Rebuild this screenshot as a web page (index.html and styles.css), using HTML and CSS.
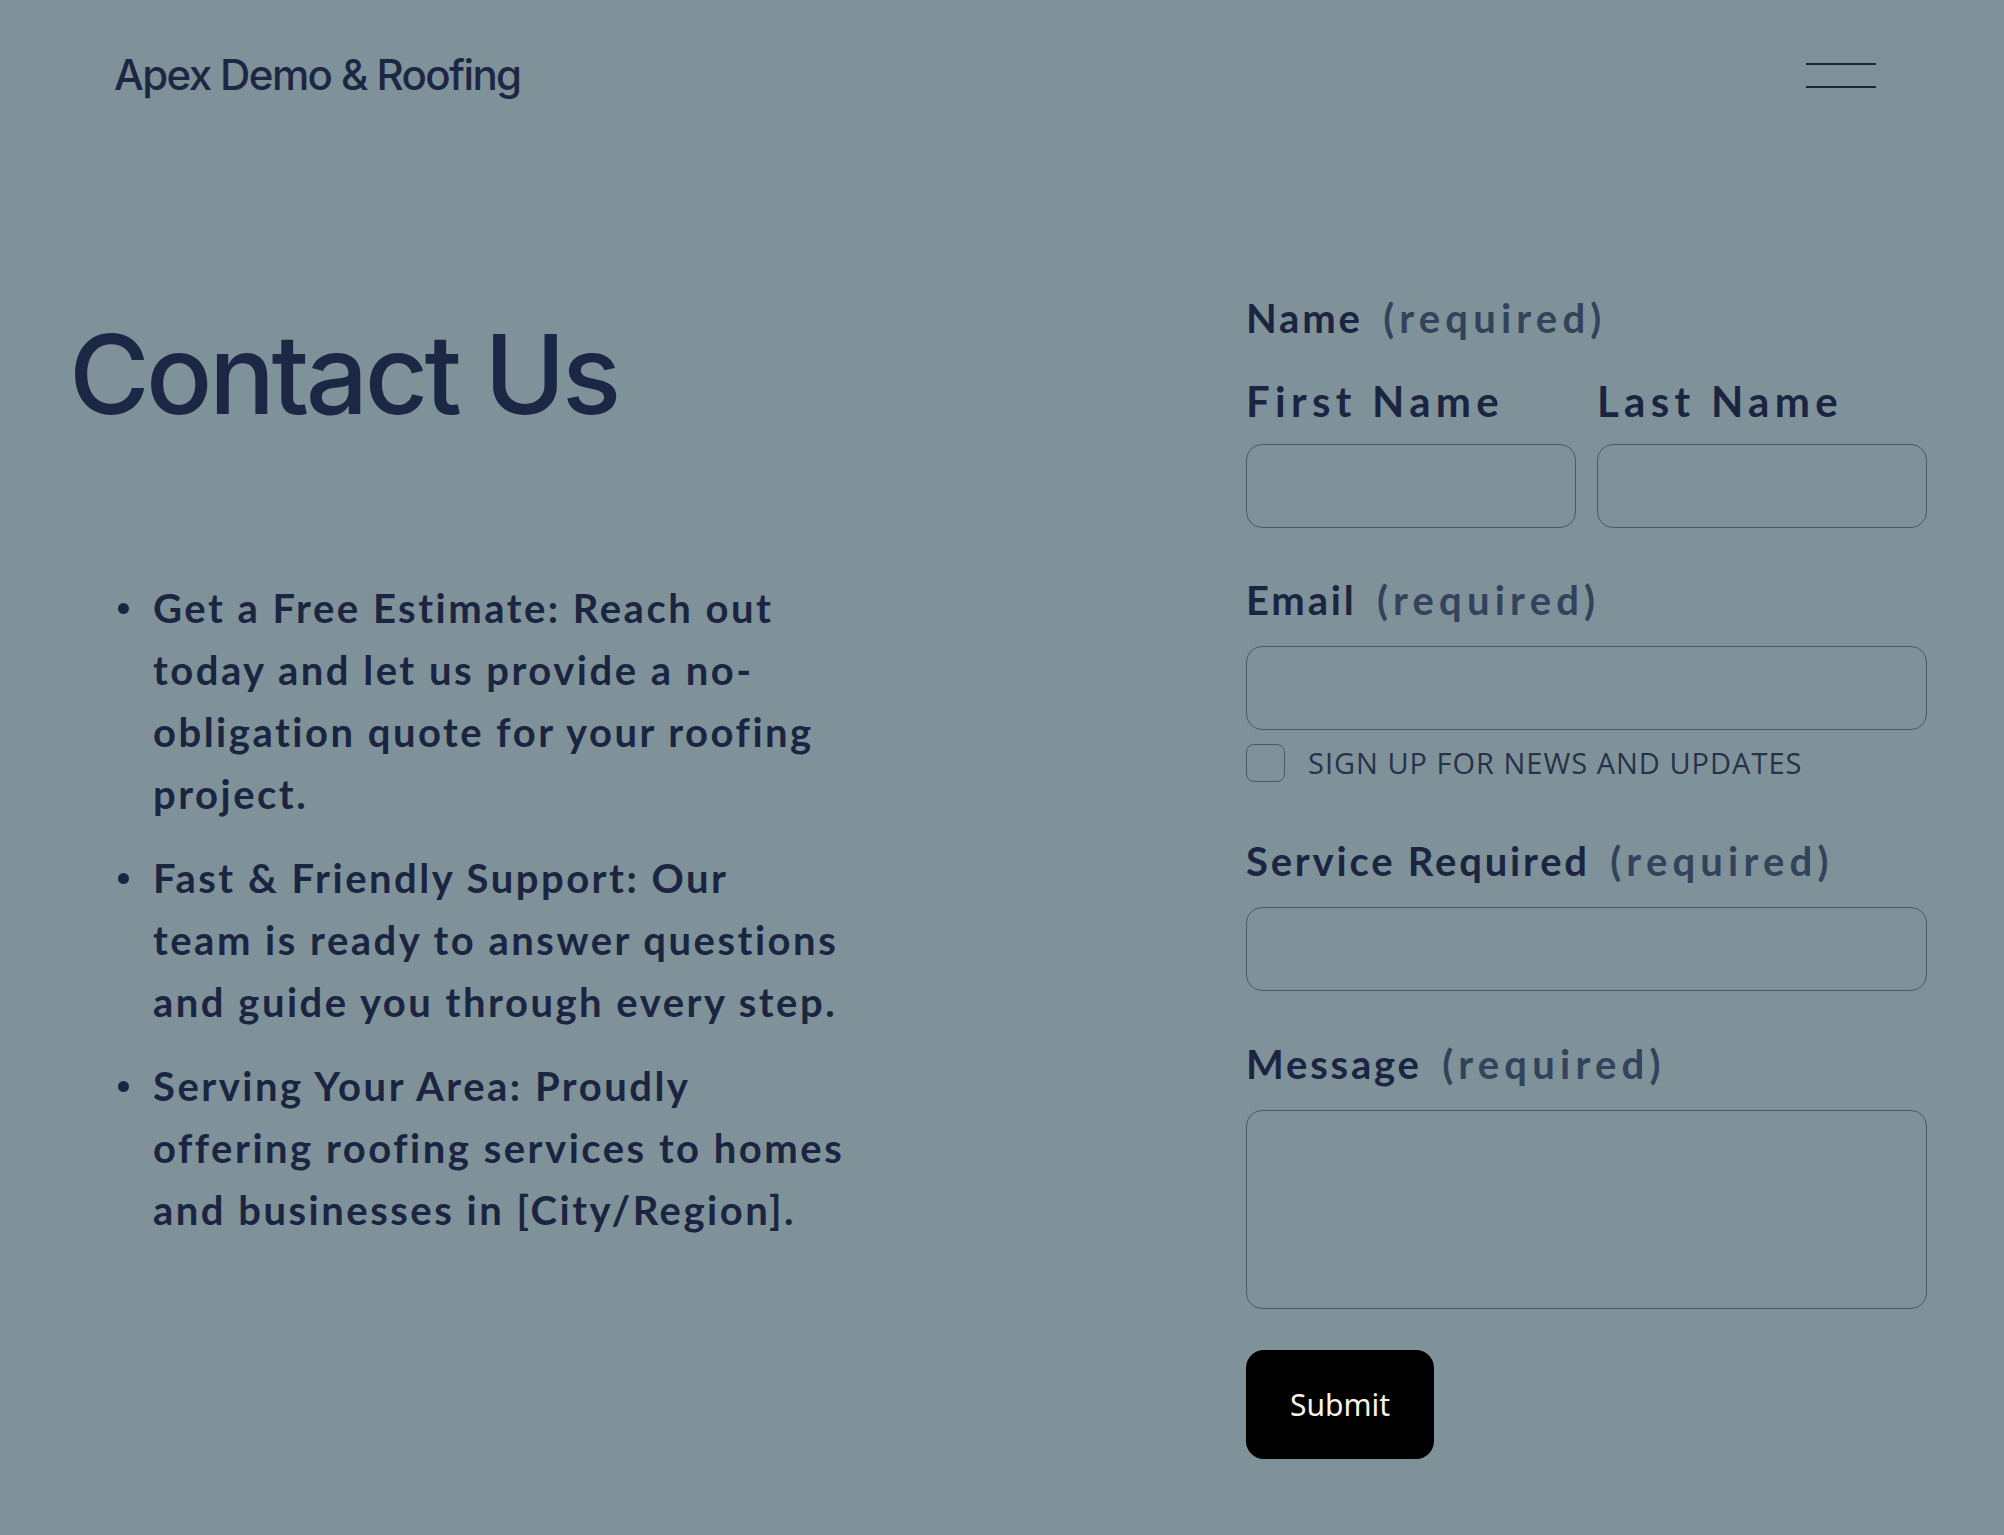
FILE: index.html
```html
<!DOCTYPE html>
<html lang="en">
<head>
<meta charset="utf-8">
<title>Contact Us — Apex Demo &amp; Roofing</title>
<link rel="stylesheet" href="styles.css">
</head>
<body>
<header class="site-header">
  <a class="logo" href="#">Apex Demo &amp; Roofing</a>
  <button class="menu-toggle" aria-label="Open menu">
    <span class="menu-line"></span>
    <span class="menu-line"></span>
  </button>
</header>
<main class="contact">
  <section class="intro">
    <h1 class="title">Contact Us</h1>
    <ul class="perks">
      <li>Get a Free Estimate: Reach out today and let us provide a no-obligation quote for your roofing project.</li>
      <li>Fast &amp; Friendly Support: Our<br>team is ready to answer questions and guide you through every step.</li>
      <li>Serving Your Area: Proudly offering roofing services to homes and businesses in [City/Region].</li>
    </ul>
  </section>
  <form class="form" onsubmit="return false">
    <div class="field field-name">
      <div class="label">Name <span class="req">(required)</span></div>
      <div class="name-row">
        <label class="sub">
          <span class="sub-label">First Name</span>
          <input class="input" type="text">
        </label>
        <label class="sub">
          <span class="sub-label">Last Name</span>
          <input class="input" type="text">
        </label>
      </div>
    </div>
    <div class="field">
      <label class="label" for="email">Email <span class="req">(required)</span></label>
      <input class="input" id="email" type="email">
      <label class="check">
        <span class="box"></span>
        <span class="check-text">SIGN UP FOR NEWS AND UPDATES</span>
      </label>
    </div>
    <div class="field field-after-check">
      <label class="label" for="service">Service Required <span class="req">(required)</span></label>
      <input class="input" id="service" type="text">
    </div>
    <div class="field">
      <label class="label" for="msg">Message <span class="req">(required)</span></label>
      <textarea class="input textarea" id="msg"></textarea>
    </div>
    <button class="submit" type="submit">Submit</button>
  </form>
</main>
</body>
</html>
```

FILE: styles.css
```css
* { box-sizing: border-box; }

html, body {
  margin: 0;
  padding: 0;
}

body {
  background: #7f9299;
  color: #1b2542;
  font-family: Lato, "Liberation Sans", sans-serif;
  min-height: 1535px;
}

.site-header {
  display: flex;
  align-items: center;
  justify-content: space-between;
  height: 150px;
  padding: 0 128px 0 114px;
}

.logo {
  font-family: Inter, "Liberation Sans", sans-serif;
  font-size: 42px;
  font-weight: 500;
  letter-spacing: -1.6px;
  color: #1d2744;
  text-decoration: none;
  line-height: 50px;
}

.menu-toggle {
  display: flex;
  flex-direction: column;
  gap: 21px;
  width: 70px;
  padding: 0;
  background: none;
  border: 0;
  cursor: pointer;
}

.menu-line {
  display: block;
  height: 2px;
  width: 70px;
  background: #1b2638;
}

.contact {
  display: grid;
  grid-template-columns: 1fr 681px;
  padding: 0 77px 0 69px;
}

.intro {
  padding-top: 164px;
}

.title {
  margin: 0;
  font-family: Inter, "Liberation Sans", sans-serif;
  font-size: 110px;
  font-weight: 500;
  line-height: 1.1;
  letter-spacing: -3.6px;
  color: #1c2645;
}

.perks {
  list-style: none;
  margin: 142px 0 0;
  padding: 0 0 0 84px;
  width: 792px;
  font-size: 40px;
  font-weight: 700;
  line-height: 62px;
  letter-spacing: 2.5px;
  color: #1b2542;
}

.perks li {
  position: relative;
  margin-bottom: 22px;
}

.perks li::before {
  content: "";
  position: absolute;
  left: -35px;
  top: 26px;
  width: 11px;
  height: 11px;
  border-radius: 50%;
  background: #1b2542;
}

.form {
  padding-top: 143px;
  display: flex;
  flex-direction: column;
}

.field {
  display: flex;
  flex-direction: column;
  margin-bottom: 48px;
}

.field-name {
  margin-bottom: 47px;
}

.field-after-check {
  margin-top: 6px;
}

.label {
  font-size: 40px;
  font-weight: 700;
  line-height: 50px;
  letter-spacing: 2.8px;
  color: #1b2542;
  margin-bottom: 21px;
}

.req {
  color: #34435c;
  margin-left: 8px;
  letter-spacing: 5.2px;
}

.name-row {
  display: grid;
  grid-template-columns: 1fr 1fr;
  gap: 21px;
  margin-top: 12px;
}

.sub {
  display: flex;
  flex-direction: column;
}

.sub-label {
  font-size: 42px;
  font-weight: 700;
  line-height: 50px;
  letter-spacing: 5.3px;
  margin-bottom: 18px;
}

.input {
  display: block;
  width: 100%;
  height: 84px;
  border: 1.5px solid #4b596b;
  border-radius: 16px;
  background: transparent;
  font: inherit;
}

.textarea {
  height: 199px;
  resize: none;
}

.check {
  display: flex;
  align-items: center;
  gap: 23px;
  margin-top: 13px;
}

.box {
  width: 39px;
  height: 38px;
  border: 1.5px solid #4b596b;
  border-radius: 8px;
}

.check-text {
  font-family: "Open Sans", "Noto Sans", sans-serif;
  font-size: 29px;
  font-weight: 400;
  letter-spacing: 1px;
  color: #26324a;
}

.submit {
  margin-top: -7px;
  align-self: flex-start;
  width: 188px;
  height: 109px;
  background: #000;
  color: #f7f3e8;
  border: 0;
  border-radius: 18px;
  font-family: "Noto Sans", "Open Sans", sans-serif;
  font-size: 30px;
  font-weight: 400;
  cursor: pointer;
}
```
